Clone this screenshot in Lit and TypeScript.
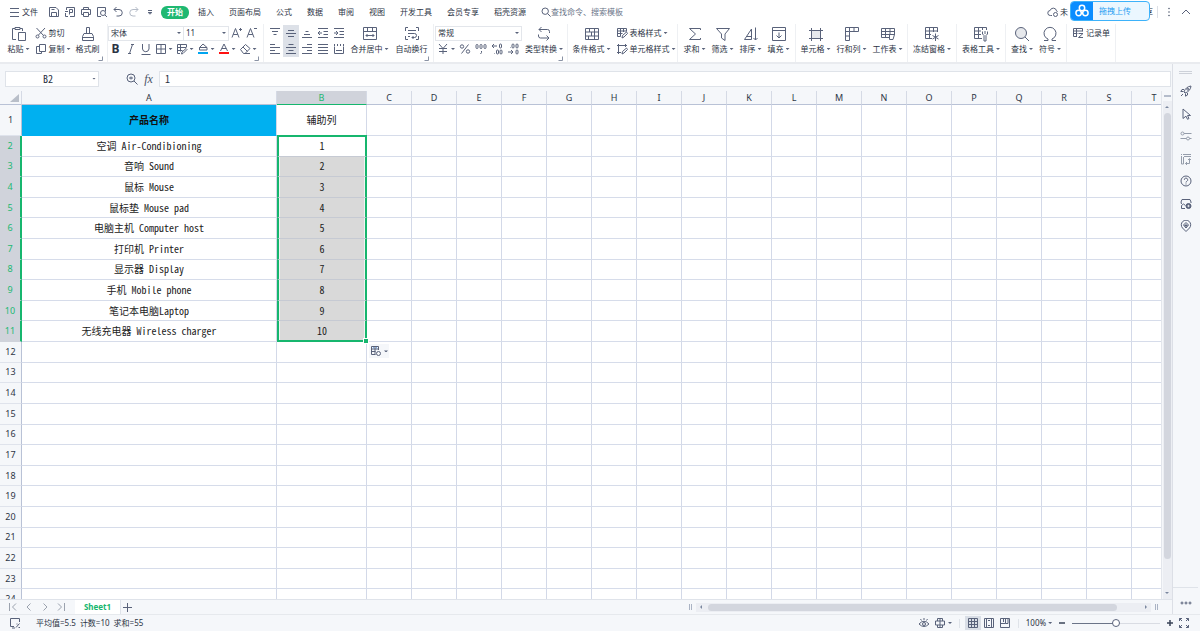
import { LitElement, html, css, svg, nothing } from "lit";
import type { TemplateResult } from "lit";
import { customElement, state } from "lit/decorators.js";
import { classMap } from "lit/directives/class-map.js";
import { styleMap } from "lit/directives/style-map.js";

/* ---------- icons ---------- */

const shapes: Record<string, [number, unknown]> = {
  menu: [12, svg`<path d="M1 2.5h9M1 6.5h9M1 10.5h9"/>`],
  save: [12, svg`<path d="M1.5 1.5h6.5l2.5 2.5v6.5h-9zM3.5 10.500v-4h5v4M3.500 3.500h3"/>`],
  pdf: [12, svg`<path d="M2.500 4V1.500h8v9H6M4 10.500H1.500V7M1 5.500h3M5.500 8.500v-5h3v3h-3"/>`],
  print: [12, svg`<path d="M3.500 3.500v-2h5v2M3 8.500H1.500v-5h9v5H9M3.500 6.500h5v4h-5z"/>`],
  preview: [12, svg`<path d="M5 10.500H1.500v-9h8v4"/><circle cx="7" cy="7" r="2.500"/><path d="M9 9l2 2"/>`],
  undo: [12, svg`<path d="M4.500 1L2 3.500 4.500 6M2 3.500h5a3 3 0 0 1 0 6.500H4.500"/>`],
  redo: [12, svg`<path stroke="#b4bbc7" d="M7.500 1L10 3.500 7.500 6M10 3.500H5A3 3 0 0 0 5 10h2.500"/>`],
  qmore: [8, svg`<path d="M2 2.500h4M2.200 4.500L4 6.200l1.800-1.700z"/>`],
  search: [10, svg`<circle cx="4.200" cy="4.200" r="3.200"/><path d="M6.600 6.600l3 3"/>`],
  cloud: [12, svg`<path d="M5 9.500H3.500a2.500 2.500 0 0 1-.4-5 3.300 3.300 0 0 1 6.400.300 2 2 0 0 1 1 1.200"/><circle cx="8.500" cy="8.500" r="2"/>`],
  dots: [10, svg`<g fill="#555f73" stroke="none"><circle cx="5" cy="1.500" r=".8"/><circle cx="5" cy="5" r=".8"/><circle cx="5" cy="8.500" r=".8"/></g>`],
  up: [10, svg`<path d="M1 7l4-4 4 4"/>`],
  disk: [16, svg`<g stroke="#fff" stroke-width="1.500"><circle cx="8" cy="5" r="2.700"/><circle cx="4.600" cy="10" r="2.700"/><circle cx="11.400" cy="10" r="2.700"/></g>`],

  paste: [16, svg`<path d="M5 13.500H1.500v-11H4M9 2.500h2.500V5M4 1.500h5v2H4zM7.500 6.500h7v8h-7z"/>`],
  cut: [12, svg`<path d="M1.500 1l7 7.500M10 1L3.500 8"/><circle cx="2.500" cy="9.500" r="1.500"/><circle cx="9.500" cy="9.500" r="1.500"/>`],
  copy: [12, svg`<path d="M4.500 1.500h6v7h-6zM4.500 3.500h-3v7h5v-2"/>`],
  brush: [16, svg`<path d="M6.500 7.500v-6h3v6M2.500 14.500v-4l1.500-3h8l1.500 3v4zM2.500 11.500h11"/>`],
  fontUp: [12, svg`<path d="M1 10.500L4.500 1.500 8 10.500M2.200 7.500h4.600M8 2.500h3M9.500 1v3"/>`],
  fontDown: [12, svg`<path d="M1 10.500L4.500 1.500 8 10.500M2.200 7.500h4.600M8 1.500h3"/>`],
  italic: [12, svg`<path d="M6 1.500h3M3 10.500h3M7.500 1.500l-3 9"/>`],
  underline: [12, svg`<path d="M2.500 1v5a3.300 3.300 0 0 0 6.500 0V1M1.500 11.500h9"/>`],
  borders: [12, svg`<path d="M1.500 1.500h9v9h-9zM6 1.500v9M1.500 6h9"/>`],
  cellPen: [12, svg`<path d="M10.500 4V1.500h-9v9H4M1.500 4.500h9M4.500 1.500v7M1.500 7.500h5M5.500 11l.500-2 4-3.500 1 1L7 10.500z"/>`],
  bucket: [12, svg`<path d="M2.500 4.500L6 1l4 3.500v2.500h-7.500zM2.500 4.500h7.500"/><path stroke="#00a5f0" stroke-width="2" d="M1 10h10"/>`],
  fontColor: [12, svg`<path d="M2.500 8L6 1l3.500 7M3.700 5.500h4.600"/><path stroke="#f11" stroke-width="2" d="M1 10h10"/>`],
  eraser: [12, svg`<path d="M1.500 6.500l5-5 4.500 4-5 5H4.500zM4 4l4.500 4.500M6 10.500h5"/>`],
  aTop: [12, svg`<path d="M1 1.500h10M3 4.500h6M4.500 7.500h3"/>`],
  aMid: [12, svg`<path d="M3 3.500h6M1 6.500h10M3 9.500h6"/>`],
  aBot: [12, svg`<path d="M4.500 4.500h3M3 7.500h6M1 10.500h10"/>`],
  outdent: [12, svg`<path d="M1 1.500h10M6.500 4.500H11M6.500 7.500H11M1 10.500h10M5 6H1M3 4L1 6l2 2"/>`],
  indent: [12, svg`<path d="M1 1.500h10M6.500 4.500H11M6.500 7.500H11M1 10.500h10M1 6h4M3 4l2 2-2 2"/>`],
  aLeft: [12, svg`<path d="M1 1.500h5M1 4.500h10M1 7.500h5M1 10.500h10"/>`],
  aCenter: [12, svg`<path d="M3.500 1.500h5M1 4.500h10M3.500 7.500h5M1 10.500h10"/>`],
  aRight: [12, svg`<path d="M6 1.500h5M1 4.500h10M6 7.500h5M1 10.500h10"/>`],
  aJust: [12, svg`<path d="M1 1.500h10M1 4.500h10M1 7.500h10M1 10.500h10"/>`],
  spread: [12, svg`<path d="M1.500 4v6.500h9V4M3 7.500h6M1.500 1v2.500M4.500 1v2M7.500 1v2M10.500 1v2.500"/>`],
  merge: [16, svg`<path d="M1.500 1.500h13v12h-13zM1.500 5.500h13M5.500 1.500v4M10.500 1.500v4M4 9.500h8M5.500 8L4 9.500 5.500 11M10.500 8l1.500 1.500-1.500 1.500"/>`],
  wrap: [16, svg`<path d="M4 1.500H1.500V5M1.500 10v3.500H4M12 1.500h2.500V5M14.500 10v3.500H12M4 4.500h8M4 7.500h6.500a2 2 0 0 1 0 4H8M9.500 10L8 11.500 9.500 13M4 10.500h2"/>`],
  yen: [12, svg`<path d="M2 1l4 4.500L10 1M6 5.500V11M2 5.500h8M2 8.500h8"/>`],
  percent: [12, svg`<circle cx="3" cy="3.500" r="1.700"/><circle cx="9" cy="8.500" r="1.700"/><path d="M9.500 1.500l-7 9"/>`],
  thousands: [12, svg`<rect x="1" y="1.500" width="2" height="4" rx="1"/><rect x="5" y="1.500" width="2" height="4" rx="1"/><rect x="9" y="1.500" width="2" height="4" rx="1"/><path d="M6.500 8v1.500l-1 1.500"/>`],
  decUp: [12, svg`<path d="M1 3h5M3 1L1 3l2 2M3.500 10.500v.5"/><rect x="8.500" y="1" width="2" height="4" rx="1"/><rect x="5.500" y="7" width="2" height="4" rx="1"/><rect x="9" y="7" width="2" height="4" rx="1"/>`],
  decDown: [12, svg`<path d="M1 9h5M4 7l2 2-2 2M3.500 4.500v.5"/><rect x="5" y="1" width="2" height="4" rx="1"/><rect x="9" y="1" width="2" height="4" rx="1"/><rect x="9" y="7" width="2" height="4" rx="1"/>`],
  convert: [16, svg`<path d="M5.500 1L3 3.500 5.500 6M3 3.500h8.500a2 2 0 0 1 2 2V7M10.500 9.500L13 12l-2.500 2.500M13 12H4.500a2 2 0 0 1-2-2V8.500"/>`],
  cond: [16, svg`<path d="M1.500 2.500h13v11h-13zM1.500 6h13M1.500 10h13M5.500 2.500V6M10.500 2.500V10M7.500 6v4M4.500 10v3.500M10.500 10v3.500"/>`],
  tblStyle: [12, svg`<path d="M10.500 4.500v-3h-9v8h3M1.500 4h9M1.500 6.500h5M4.500 1.500v8M7.500 1.500V5M6 11l.5-2.500 4-3.500 1 1.500-3.500 3.500z"/>`],
  cellStyle: [12, svg`<path d="M2.500 1v10M1 2.500h10M9.500 1v3M1 9.500h4M6 11l.5-2.500 4-3.500 1 1.500-3.500 3.500z"/>`],
  sum: [16, svg`<path d="M13.500 4V2.500h-11L8.500 8l-6 5.500h11V12"/>`],
  filter: [16, svg`<path d="M1.500 2.500h13L10 8v6.500L6.500 12V8z"/>`],
  sort: [16, svg`<path d="M1.500 13.500L8.500 3v10.500M3.500 10.500h5M1.500 13.500h7M12.500 1.500v12.500M10.500 12l2 2 2-2"/>`],
  fill: [16, svg`<path d="M1.500 1.500h13v13h-13zM1.500 4.500h13M8 6.500V12M5.500 9.500L8 12l2.500-2.500"/>`],
  cell: [16, svg`<rect x="3.500" y="4.500" width="9" height="8" fill="#e6e8ec"/><path d="M3.500 2v13M12.500 2v13M1 4.500h14M1 12.500h14"/>`],
  rowcol: [16, svg`<path d="M1.500 1.500h13v4h-9v9h-4zM1.500 5.500h4M5.500 1.500v4M10 1.500v4M1.500 10h4"/>`],
  sheet: [16, svg`<path d="M9 11.500H1.500v-9h13V9M1.500 5.500h13M1.500 8.500h13M5.500 2.500v9M10 2.500v6M9.500 8.500v5h3.500l1.500-5"/>`],
  freeze: [16, svg`<path d="M8 12.500H1.500v-11h12V6M1.500 5h12M1.500 8.500H7M5.500 1.500v11M9.500 1.500V6M11.500 7.500v7.500M8.500 9.500l6 3.500M14.500 9.500l-6 3.500"/>`],
  tools: [16, svg`<path d="M9 12.500H1.500v-11h12V4M1.500 5H8M1.500 8.500H8M5.500 1.500v11M9.500 1.500V4M9.500 5.500v2.500l1.500 1.500V15h2V9.500l1.500-1.500V5.500M12 5v3"/>`],
  find: [16, svg`<circle cx="7" cy="7" r="5.500" fill="#e6e8ec"/><path d="M11 11l4 4"/>`],
  omega: [16, svg`<path d="M2 14.500h4V13A6 6 0 1 1 10 13v1.500h4"/>`],
  form: [12, svg`<path d="M5 9.500H1.500v-8h9v3M1.500 4h9M1.500 6.500h4M4.500 1.500v8M6.500 6.500H11l-4.500 4H11"/>`],
  corner: [5, svg`<path d="M.5 4.500h4v-4"/>`],

  zoomIn: [12, svg`<circle cx="5" cy="5" r="4"/><path d="M8 8l3.500 3.500M3 5h4M5 3.500v3"/>`],
  rocket: [12, svg`<path d="M5 8L4 7c1-3.500 3.500-5.500 7-6-.3 3.500-2.500 6-6 7zM4 4.500H2L.8 6.500h2.700M7.500 8v2L5.500 11.200V8.500M1 11l2-2"/><circle cx="7.800" cy="4.200" r="1"/>`],
  pointer: [12, svg`<path d="M3 1l7.500 6.500H7.500L9 10.500l-1.500.8L6 8.200 3 10.500z"/>`],
  sliders: [12, svg`<g stroke="#959dab"><circle cx="2.500" cy="3.500" r="1.500"/><path d="M4 3.500h7.500M.500 8.500h6M9.500 8.500h2"/><circle cx="8" cy="8.500" r="1.500"/></g>`],
  transpose: [12, svg`<g stroke="#959dab"><path d="M1.500 11V3M3 1.500h8M1.500 1v1M3.500 4v7h-2M4 3.500h7M9.500 6v4.500h-4M8 7l1.500-1.500L11 7M7 9l-1.500 1.500L7 12"/></g>`],
  help: [12, svg`<circle cx="6" cy="6" r="5"/><path d="M4.300 4.800a1.700 1.700 0 1 1 2.500 1.500q-.8.400-.8 1.200M6 8.500v1"/>`],
  picture: [12, svg`<path d="M5 10.500H1.500V7.500l2-1.500 2 1.500M1.500 6L1 4l1-2.500h8l1 2.500v1"/><circle cx="8.500" cy="8" r="2.500" fill="#59627a"/><circle cx="8.500" cy="8" r=".7" stroke="#fff"/>`],
  pin: [12, svg`<path d="M6 11.500L2.500 8a4.700 4.700 0 1 1 7 0z"/><path d="M6 2.500L8.500 5 6 8 3.500 5zM6 4v4M4.500 5.500h3"/>`],
  more: [12, svg`<circle cx="2" cy="6" r="1"/><circle cx="6" cy="6" r="1"/><circle cx="10" cy="6" r="1"/>`],
  pasteOpt: [12, svg`<path d="M5.500 9.500h-4v-8h7V5M1.500 4h7M1.500 6.500h4M5 1.500v8"/><circle cx="8.500" cy="8.500" r="2"/><path stroke="#4d8fe0" d="M3 2.800h1M6 2.800h1"/>`],

  first: [10, svg`<path stroke="#9ba2ae" d="M1.500 1v8M8 1.500L4.500 5 8 8.500"/>`],
  prev: [10, svg`<path stroke="#9ba2ae" d="M6.500 1.500L3 5l3.500 3.500"/>`],
  next: [10, svg`<path stroke="#9ba2ae" d="M3.500 1.500L7 5 3.500 8.500"/>`],
  last: [10, svg`<path stroke="#9ba2ae" d="M8.500 1v8M2 1.500L5.500 5 2 8.500"/>`],
  plus: [10, svg`<path d="M5.500 1v9M1 5.500h9"/>`],
  bplus: [8, svg`<path stroke="#3a4458" stroke-width="1.500" d="M4 1v6M1 4h6"/>`],
  bminus: [8, svg`<path stroke="#3a4458" stroke-width="1.500" d="M1 4h6"/>`],
  record: [12, svg`<path d="M5 9.500H1.500v-8h9V5M3 11h3"/><path d="M7 10.500l3.500-4M7.500 7h1M9.500 10.500h1.500"/>`],
  eye: [12, svg`<path d="M1 7q5-5.500 10 0-5 5-10 0zM6 1v2M2.500 2l1 1.500M9.500 2l-1 1.500"/><circle cx="6" cy="7" r="1.500"/>`],
  cross: [12, svg`<path d="M3.500 4V1.500h5V4M3.500 8v2.500h5V8M1.500 4h9v4h-9zM6 1.500v9"/>`],
  vTable: [12, svg`<path d="M1.500 1.500h9v9h-9zM1.500 4.500h9M1.500 7.500h9M4.500 1.500v9M7.500 1.500v9"/>`],
  vPage: [12, svg`<path d="M1.500 1.500h9v9h-9zM3.500 1.500v9M8.500 1.500v9M5 3.500h2M5 8.500h2"/>`],
  vBreak: [12, svg`<path d="M1.500 1.500h9v9h-9zM1.500 6.500h5V1.500M4.500 1.500V5M9 1.500v5H6.500"/>`],
  full: [12, svg`<path d="M1.500 4V1.500H4M8 1.500h2.500V4M10.500 8v2.500H8M4 10.500H1.500V8M1.500 1.500l2.500 2.500M10.500 1.500L8 4M10.500 10.500L8 8M1.500 10.500L4 8"/>`],
};

const icon = (name: string) => {
  const [s, body] = shapes[name];
  return html`<svg class="ic" width=${s} height=${s} viewBox="0 0 ${s} ${s}" aria-hidden="true">${body}</svg>`;
};
const caret = html`<i class="caret"></i>`;

/* ---------- data ---------- */

const tabs = ["插入", "页面布局", "公式", "数据", "审阅", "视图", "开发工具", "会员专享", "稻壳资源"];
const products = [
  "空调 Air-Condibioning", "音响 Sound", "鼠标 Mouse", "鼠标垫 Mouse pad", "电脑主机 Computer host",
  "打印机 Printer", "显示器 Display", "手机 Mobile phone", "笔记本电脑Laptop", "无线充电器 Wireless charger",
];

const columnName = (n: number): string =>
  n < 26 ? String.fromCharCode(65 + n) : columnName(Math.floor(n / 26) - 1) + String.fromCharCode(65 + (n % 26));

const big = (name: string, label: string, drop = true) => html`
  <button class="big">${icon(name)}<span class="lbl">${label}${drop ? caret : nothing}</span></button>`;
const small = (name: string, label: string, drop = true) => html`
  <button class="small">${icon(name)}<span class="lbl">${label}${drop ? caret : nothing}</span></button>`;
const tool = (name: string, title: string, drop = false, on = false) => html`
  <button class=${classMap({ tool: true, drop, on })} aria-label=${title}>${icon(name)}${drop ? caret : nothing}</button>`;

const base = css`
  * { box-sizing: border-box; }
  button, input, select {
    font: inherit; color: inherit; border: 0; background: none; padding: 0; margin: 0; outline: 0; border-radius: 0;
  }
  button { display: flex; align-items: center; justify-content: center; white-space: nowrap; flex: none; }
  .ic { display: block; flex: none; fill: none; stroke: #59627a; stroke-width: 1; }
  .caret {
    display: inline-block; flex: none; width: 4px; height: 2px; margin-left: 2px; vertical-align: middle;
    background: #59627a; clip-path: polygon(0 0, 100% 0, 50% 100%);
  }
`;

/* ---------- menu bar ---------- */

@customElement("menu-bar")
class MenuBar extends LitElement {
  static styles = [base, css`
    :host { display: flex; align-items: center; height: 24px; background: #fff; position: relative; padding: 0 9px; flex: none; }
    .file { gap: 1px; width: 33px; margin-right: 4px; justify-content: flex-start; }
    .quick { display: flex; align-items: center; }
    .quick button { width: 16px; height: 16px; }
    nav { display: flex; align-items: center; gap: 15px; margin-right: 15px; }
    .home { background: #1fb871; color: #fff; font-weight: 700; border-radius: 6px; height: 13px; width: 28px; margin: 0 9px 0 3px; }
    .find { display: flex; align-items: center; }
    .find input { width: 90px; height: 12px; line-height: 12px; }
    .find input::placeholder { color: #6b7589; opacity: 1; }
    .right { display: flex; align-items: center; margin-left: auto; }
    .sync { gap: 1px; margin-right: 77px; }
    .share { width: 8px; }
    .line { width: 1px; height: 12px; background: #dde0e6; margin: 0 6px 0 4px; }
    .right .dots { margin-right: 7px; }
    .upload {
      position: absolute; top: 1px; right: 50px; width: 80px; height: 20px; display: flex;
      border: 1px solid #3db2fa; border-radius: 4px; overflow: hidden; background: #ebf7ff; color: #1d9df2;
    }
    .logo { width: 22px; height: 20px; background: #0a8dff; display: grid; place-items: center; }
    .upload b { flex: 1; font-weight: 400; padding-right: 12px; }
  `];
  render() {
    return html`
      <button class="file">${icon("menu")}文件</button>
      <div class="quick">
        ${[["save", "保存"], ["pdf", "输出为PDF"], ["print", "打印"], ["preview", "打印预览"], ["undo", "撤销"], ["redo", "恢复"], ["qmore", "更多"]]
          .map(([n, t]) => html`<button aria-label=${t}>${icon(n)}</button>`)}
      </div>
      <button class="home">开始</button>
      <nav>${tabs.map((t) => html`<button>${t}</button>`)}</nav>
      <label class="find">${icon("search")}<input type="search" aria-label="搜索" placeholder="查找命令、搜索模板"></label>
      <div class="right">
        <button class="sync">${icon("cloud")}未</button>
        <button class="share">享</button>
        <span class="line"></span>
        <button class="dots" aria-label="更多">${icon("dots")}</button>
        <button aria-label="收起">${icon("up")}</button>
      </div>
      <button class="upload"><span class="logo">${icon("disk")}</span><b>拖拽上传</b></button>
    `;
  }
}

/* ---------- ribbon ---------- */

@customElement("ribbon-bar")
class RibbonBar extends LitElement {
  static styles = [base, css`
    :host { display: flex; height: 40px; background: #fff; border-bottom: 2px solid #e9ebef; flex: none; overflow: hidden; }
    .group { display: flex; flex: none; justify-content: center; padding-top: 2px; border-right: 1px solid #eef0f3; position: relative; height: 38px; }
    .big { flex-direction: column; justify-content: flex-start; height: 32px; padding: 0 3px; }
    .lbl { height: 14px; line-height: 14px; display: flex; align-items: center; }
    .small { height: 14px; gap: 2px; }
    .stack { display: flex; flex-direction: column; gap: 2px; align-items: flex-start; }
    .row { display: flex; align-items: center; height: 14px; }
    .tool { width: 16px; height: 15px; }
    .tool.drop { width: 22px; }
    .tool.on { background: #dde1e8; height: 16px; }
    .bold { font-weight: 700; font-size: 12px; width: 15px; }
    .corner { position: absolute; right: 4px; bottom: 1px; }
    .corner .ic { stroke: #8a93a5; }
    .pick { position: relative; display: flex; align-items: center; border: 1px solid #e3e6eb; height: 15px; }
    .pick select { appearance: none; width: 100%; height: 13px; padding-left: 2px; }
    .pick .caret { position: absolute; right: 2px; pointer-events: none; }
    .family { width: 76px; }
    .size { width: 46px; margin-left: -1px; }
    .format { width: 87px; }
    .clip { width: 108px; gap: 2px; }
    .font { width: 156px; justify-content: flex-start; }
    .font .tool { width: 15px; }
    .font .drop { width: 21px; }
    .align { width: 170px; gap: 1px; }
    .number { width: 134px; }
    .styles { width: 110px; gap: 2px; }
    .edit { width: 118px; }
    .cells { width: 112px; }
    .single { width: 49px; }
    .look { width: 61px; }
    .forms { width: 49px; }
  `];
  render() {
    const corner = html`<span class="corner">${icon("corner")}</span>`;
    return html`
      <div class="group clip">
        ${big("paste", "粘贴")}
        <div class="stack">${small("cut", "剪切", false)}${small("copy", "复制")}</div>
        ${big("brush", "格式刷", false)}${corner}
      </div>
      <div class="group font">
        <div class="stack">
          <div class="row">
            <label class="pick family"><select aria-label="字体"><option>宋体</option></select>${caret}</label>
            <label class="pick size"><select aria-label="字号"><option>11</option></select>${caret}</label>
            ${tool("fontUp", "增大字号")}${tool("fontDown", "减小字号")}
          </div>
          <div class="row">
            <button class="bold" aria-label="加粗">B</button>${tool("italic", "倾斜")}${tool("underline", "下划线")}
            ${tool("borders", "边框", true)}${tool("cellPen", "绘图边框", true)}${tool("bucket", "填充颜色", true)}
            ${tool("fontColor", "字体颜色", true)}${tool("eraser", "清除", true)}
          </div>
        </div>${corner}
      </div>
      <div class="group align">
        <div class="stack">
          <div class="row">${tool("aTop", "顶端对齐")}${tool("aMid", "垂直居中", false, true)}${tool("aBot", "底端对齐")}${tool("outdent", "减少缩进")}${tool("indent", "增加缩进")}</div>
          <div class="row">${tool("aLeft", "左对齐")}${tool("aCenter", "水平居中", false, true)}${tool("aRight", "右对齐")}${tool("aJust", "两端对齐")}${tool("spread", "分散对齐")}</div>
        </div>
        ${big("merge", "合并居中")}${big("wrap", "自动换行", false)}${corner}
      </div>
      <div class="group number">
        <div class="stack">
          <div class="row"><label class="pick format"><select aria-label="数字格式"><option>常规</option></select>${caret}</label></div>
          <div class="row">${tool("yen", "货币", true)}${tool("percent", "百分比")}${tool("thousands", "千位分隔")}${tool("decUp", "增加小数位")}${tool("decDown", "减少小数位")}</div>
        </div>
        ${big("convert", "类型转换")}${corner}
      </div>
      <div class="group styles">
        ${big("cond", "条件格式")}
        <div class="stack">${small("tblStyle", "表格样式")}${small("cellStyle", "单元格样式")}</div>
      </div>
      <div class="group edit">${big("sum", "求和")}${big("filter", "筛选")}${big("sort", "排序")}${big("fill", "填充")}</div>
      <div class="group cells">${big("cell", "单元格")}${big("rowcol", "行和列")}${big("sheet", "工作表")}</div>
      <div class="group single">${big("freeze", "冻结窗格")}</div>
      <div class="group single">${big("tools", "表格工具")}</div>
      <div class="group look">${big("find", "查找")}${big("omega", "符号")}</div>
      <div class="group forms"><div class="stack">${small("form", "记录单", false)}</div></div>
    `;
  }
}

/* ---------- spreadsheet ---------- */

@customElement("sheet-grid")
class SheetGrid extends LitElement {
  static styles = [base, css`
    :host { display: block; flex: 1; min-width: 0; overflow: hidden; background: #fff; }
    table { display: grid; width: max-content; grid-template-rows: 14px 31px; grid-auto-rows: 1fr; }
    thead, tbody, tr { display: contents; }
    th, td { display: flex; align-items: center; justify-content: center; padding: 0; font-weight: 400; white-space: nowrap; min-height: 0; }
    th { background: #f5f7fa; font-size: 9px; line-height: 12px; color: #2e3646; }
    thead th { border-bottom: 1px solid #b9c2d6; border-right: 1px solid #d5dae5; }
    tbody th { border-right: 1px solid #b9c2d6; border-bottom: 1px solid #dfe3ec; }
    td {
      border-right: 1px solid #d3d9e8; border-bottom: 1px solid #d6dcea;
      font-family: "Noto Sans CJK SC", sans-serif; font-size: 10px; line-height: 14px; color: #222;
      font-feature-settings: "hwid";
    }
    thead .all { justify-content: flex-end; align-items: flex-end; padding: 0 2px 2px 0; }
    .all i { width: 9px; height: 8px; background: #b9bfc9; clip-path: polygon(100% 0, 100% 100%, 0 100%); }
    thead .hot { background: #d0d3db; color: #21b872; border-bottom: 1px solid #16b66e; }
    tbody .hot { background: #d0d3db; color: #21b872; border-right: 2px solid #16b66e; border-bottom-color: #d0d3db; }
    .title { background: #00b0f0; color: #111; font-weight: 700; border-bottom-color: #00b0f0; }
    .sel {
      position: relative; background: #d9d9d9; border-left: 2px solid #16b66e; border-right: 2px solid #16b66e;
      border-bottom-color: #c6cad3; box-shadow: inset 1px 0 #f2f2f2, inset -1px 0 #f2f2f2;
    }
    .active { background: #fff; box-shadow: 0 -1px #16b66e; border-top: 1px solid #16b66e; }
    .end { border-bottom: 2px solid #16b66e; }
    .handle { position: absolute; right: -3px; bottom: -3px; width: 4px; height: 4px; background: #16b66e; outline: 1px solid #fff; z-index: 1; }
    .opt { position: absolute; left: 90px; top: 23px; width: 20px; height: 14px; background: #f5f7fa; }
  `];

  @state() private cols = 20;
  @state() private rows = 24;
  private observer = new ResizeObserver(([entry]) => {
    const { width, height } = entry.contentRect;
    this.cols = Math.max(3, 2 + Math.ceil((width - 367) / 45));
    this.rows = Math.max(12, 1 + Math.ceil((height - 45) / 20.6));
  });
  connectedCallback() {
    super.connectedCallback();
    this.observer.observe(this);
  }
  disconnectedCallback() {
    this.observer.disconnect();
    super.disconnectedCallback();
  }

  cell(row: number, col: number) {
    if (col === 0) return html`<td class=${row === 1 ? "title" : ""}>${row === 1 ? "产品名称" : products[row - 2] ?? ""}</td>`;
    if (col === 1 && row === 1) return html`<td>辅助列</td>`;
    if (col === 1 && row <= 11) {
      const end = row === 11;
      return html`<td class=${classMap({ sel: true, active: row === 2, end })}>${row - 1}${end
        ? html`<span class="handle"></span><button class="opt" aria-label="自动填充选项">${icon("pasteOpt")}${caret}</button>`
        : nothing}</td>`;
    }
    return html`<td></td>`;
  }
  render() {
    const columns = Array.from({ length: this.cols }, (_, i) => columnName(i));
    const size = {
      height: `${45 + Math.round((this.rows - 1) * 20.6)}px`,
      gridTemplateColumns: `22px 255px 90px repeat(${this.cols - 2}, 45px)`,
    };
    return html`<table style=${styleMap(size)}>
      <thead><tr><th class="all"><i></i></th>${columns.map((c) => html`<th class=${c === "B" ? "hot" : ""}>${c}</th>`)}</tr></thead>
      <tbody>${Array.from({ length: this.rows }, (_, i) => i + 1).map((r) => html`
        <tr><th class=${r > 1 && r < 12 ? "hot" : ""}>${r}</th>${columns.map((_, c) => this.cell(r, c))}</tr>`)}</tbody>
    </table>`;
  }
}

/* ---------- page ---------- */

@customElement("app-root")
class AppRoot extends LitElement {
  static styles = [base, css`
    :host {
      display: flex; flex-direction: column; height: 100vh; overflow: hidden; background: #f5f7fa; color: #2b3344;
      font-family: "Noto Sans", "Noto Sans CJK SC", sans-serif; font-size: 8px; line-height: 12px;
    }
    .work { flex: 1; display: flex; min-height: 0; }
    .main { flex: 1; min-width: 0; display: flex; flex-direction: column; }
    .formula { display: flex; align-items: center; height: 27px; padding: 2px 1px 0 5px; flex: none; font-family: "Noto Sans CJK SC", sans-serif; font-size: 10px; font-feature-settings: "hwid"; }
    .name { width: 94px; height: 16px; display: flex; align-items: center; background: #fff; border: 1px solid #dfe3e9; padding-right: 2px; }
    .name input { flex: 1; min-width: 0; text-align: center; height: 14px; }
    .zoom { margin-left: 27px; width: 12px; }
    .fx { font: italic 12px/14px "Liberation Serif", serif; margin: 0 5px; width: 11px; color: #4a5367; }
    .value { flex: 1; min-width: 0; height: 16px; background: #fff; border: 1px solid #dfe3e9; padding-left: 5px; }
    .area { flex: 1; display: flex; min-height: 0; border-bottom: 1px solid #dfe3ea; }
    .vbar { width: 11px; padding: 4px 1px 0 1px; display: flex; flex-direction: column; align-items: center; border-left: 1px solid #e3e6ec; flex: none; }
    .split { width: 7px; height: 2px; background: #b4bccb; margin-bottom: 4px; }
    .track { flex: 1; width: 9px; background: #eceef3; display: flex; flex-direction: column; align-items: center; gap: 5px; padding: 5px 0; }
    .vthumb { width: 7px; flex: 1; margin-bottom: 28px; border-radius: 4px; background: #d3d6de; }
    .tri { width: 4px; height: 2px; background: #7b879f; }
    .t-up { clip-path: polygon(50% 0, 100% 100%, 0 100%); }
    .t-down { clip-path: polygon(0 0, 100% 0, 50% 100%); }
    .t-left { width: 2px; height: 4px; clip-path: polygon(100% 0, 100% 100%, 0 50%); }
    .t-right { width: 2px; height: 4px; clip-path: polygon(0 0, 100% 50%, 0 100%); }
    .tabs { display: flex; align-items: center; height: 14px; flex: none; padding: 0 14px 0 8px; }
    .pages { display: flex; gap: 6px; width: 67px; }
    .tab { background: #fff; color: #16b66e; font-weight: 700; width: 46px; height: 14px; border-right: 1px solid #dfe3ea; margin-right: 1px; }
    .hbar { width: 469px; margin-left: auto; display: flex; align-items: center; gap: 4px; }
    .grip { width: 3px; height: 6px; border: solid #aab3c4; border-width: 0 1px; }
    .htrack { flex: 1; height: 9px; background: #eceef3; display: flex; align-items: center; gap: 6px; padding: 0 4px; }
    .hthumb { flex: 1; margin-right: 22px; height: 7px; border-radius: 4px; background: #d3d6de; }
    .side { width: 28px; border-left: 1px solid #dcdfe6; display: flex; flex-direction: column; align-items: center; padding: 7px 2px 1px 0; flex: none; }
    .pull { width: 13px; height: 3px; border: solid #cdd1d9; border-width: 1px 0; }
    .sideicons { display: flex; flex-direction: column; justify-content: space-between; height: 147px; margin-top: 11px; }
    .foot { margin-top: auto; border-top: 1px solid #dfe3e9; width: 25px; height: 26px; padding-top: 4px; }
    .status { display: flex; align-items: center; height: 17px; border-top: 1px solid #e6e9ed; padding: 0 8px 0 9px; flex: none; }
    .stats { display: flex; gap: 4px; margin-left: 15px; }
    .views { display: flex; align-items: center; margin-left: auto; }
    .views button { width: 16px; height: 14px; }
    .views .wide { width: 22px; }
    .views .on { background: #d9dee6; }
    .bar { width: 1px; height: 9px; background: #dfe3e9; margin: 0 5px; }
    .views .pct { width: 30px; margin-right: 2px; }
    .views .step { width: 12px; }
    input[type="range"] { appearance: none; width: 88px; height: 12px; margin: 0 4px; background: linear-gradient(90deg, #6b7488 50%, #d9dce3 50%) center / 100% 1px no-repeat; }
    input[type="range"]::-webkit-slider-thumb { appearance: none; width: 8px; height: 8px; border: 1px solid #59627a; border-radius: 50%; background: #fff; }
  `];
  render(): TemplateResult {
    return html`
      <menu-bar></menu-bar>
      <ribbon-bar></ribbon-bar>
      <div class="work">
        <div class="main">
          <div class="formula">
            <label class="name"><input aria-label="名称框" .value=${"B2"}>${caret}</label>
            <button class="zoom" aria-label="放大">${icon("zoomIn")}</button>
            <button class="fx" aria-label="插入函数">fx</button>
            <input class="value" aria-label="编辑栏" .value=${"1"}>
          </div>
          <div class="area">
            <sheet-grid></sheet-grid>
            <div class="vbar"><span class="split"></span>
              <div class="track"><i class="tri t-up"></i><i class="vthumb"></i><i class="tri t-down"></i></div>
            </div>
          </div>
          <div class="tabs">
            <div class="pages">${[["first", "第一张"], ["prev", "上一张"], ["next", "下一张"], ["last", "最后一张"]]
              .map(([n, t]) => html`<button aria-label=${t}>${icon(n)}</button>`)}</div>
            <button class="tab">Sheet1</button>
            <button aria-label="新建工作表">${icon("plus")}</button>
            <div class="hbar"><i class="grip"></i>
              <div class="htrack"><i class="tri t-left"></i><i class="hthumb"></i><i class="tri t-right"></i></div>
              <i class="grip"></i></div>
          </div>
        </div>
        <aside class="side">
          <i class="pull"></i>
          <div class="sideicons">${[["rocket", "快捷"], ["pointer", "选择"], ["sliders", "属性"], ["transpose", "分析"], ["help", "帮助"], ["picture", "图片"], ["pin", "定位"]]
            .map(([n, t]) => html`<button aria-label=${t}>${icon(n)}</button>`)}</div>
          <button class="foot" aria-label="更多">${icon("more")}</button>
        </aside>
      </div>
      <div class="status">
        ${icon("record")}
        <div class="stats"><span>平均值=5.5</span><span>计数=10</span><span>求和=55</span></div>
        <div class="views">
          <button aria-label="护眼模式">${icon("eye")}</button>
          <button class="wide" aria-label="阅读模式">${icon("cross")}${caret}</button>
          <i class="bar"></i>
          <button class="on" aria-label="普通视图">${icon("vTable")}</button>
          <button aria-label="页面视图">${icon("vPage")}</button>
          <button aria-label="分页预览">${icon("vBreak")}</button>
          <i class="bar"></i>
          <button class="pct">100%${caret}</button>
          <button class="step" aria-label="缩小">${icon("bminus")}</button>
          <input type="range" aria-label="缩放" min="0" max="200" .value=${"100"}>
          <button class="step" aria-label="放大">${icon("bplus")}</button>
          <button aria-label="全屏">${icon("full")}</button>
        </div>
      </div>
    `;
  }
}
